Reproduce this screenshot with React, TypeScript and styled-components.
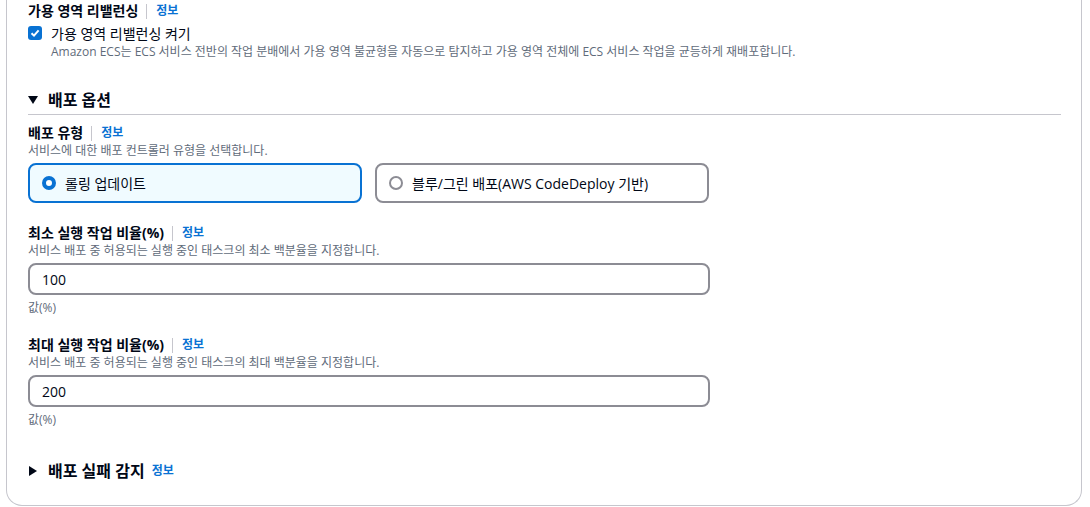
import React from "react";
import styled, { createGlobalStyle } from "styled-components";

const Global = createGlobalStyle`
  html, body { margin: 0; padding: 0; background: #ffffff; }
  body {
    font-family: "Open Sans", "Noto Sans CJK KR", "Noto Sans", sans-serif;
    color: #000716;
    -webkit-font-smoothing: antialiased;
  }
`;

const Page = styled.div`
  padding: 0 8px 1px 6px;
  height: 507px;
  box-sizing: border-box;
  display: flex;
  flex-direction: column;
`;

const Card = styled.section`
  flex: 1;
  border: 1px solid #c6c6cd;
  border-top: none;
  border-radius: 0 0 16px 16px;
  padding: 0 20px 22px 21px;
  display: flex;
  flex-direction: column;
`;

const Field = styled.div<{ $mt?: number }>`
  display: flex;
  flex-direction: column;
  margin-top: ${(p) => p.$mt ?? 0}px;
`;

const LabelRow = styled.div<{ $h?: number }>`
  display: flex;
  align-items: center;
  height: ${(p) => p.$h ?? 20}px;
`;

const Label = styled.span`
  font-size: 14px;
  font-weight: 700;
  line-height: 20px;
`;

const Sep = styled.span`
  width: 1px;
  height: 15px;
  background: #c6c6cd;
  margin: 0 9px 0 8px;
`;

const InfoLink = styled.a<{ $ml?: number }>`
  font-size: 12px;
  font-weight: 700;
  color: #0972d3;
  text-decoration: none;
  line-height: 16px;
  margin-left: ${(p) => p.$ml ?? 0}px;
`;

const Desc = styled.div<{ $indent?: number }>`
  font-size: 12px;
  line-height: 16px;
  color: #5f6b7a;
  padding-left: ${(p) => p.$indent ?? 0}px;
`;

const CheckRow = styled.label`
  display: flex;
  align-items: center;
  gap: 9px;
  height: 22px;
  font-size: 14px;
`;

const CheckBox = styled.span`
  width: 14px;
  height: 14px;
  border-radius: 3px;
  background: #0972d3;
  display: flex;
  align-items: center;
  justify-content: center;
`;

const SectionHeader = styled.div<{ $divider?: boolean; $mt?: number }>`
  display: flex;
  align-items: center;
  gap: 10px;
  height: 24px;
  margin-top: ${(p) => p.$mt ?? 0}px;
  padding-bottom: ${(p) => (p.$divider ? 2 : 0)}px;
  border-bottom: ${(p) => (p.$divider ? "1px solid #c6c6cd" : "none")};
`;

const SectionTitle = styled.h2`
  margin: 0;
  font-size: 16px;
  font-weight: 700;
  line-height: 24px;
`;

const Tiles = styled.div`
  display: flex;
  gap: 13px;
  margin-top: 4px;
`;

const Tile = styled.div<{ $selected?: boolean }>`
  width: 334px;
  height: 40px;
  box-sizing: border-box;
  border: 2px solid ${(p) => (p.$selected ? "#0972d3" : "#8c8c94")};
  background: ${(p) => (p.$selected ? "#f0fbff" : "#ffffff")};
  border-radius: 8px;
  display: flex;
  align-items: center;
  gap: 9px;
  padding: 0 12px;
  font-size: 14px;
`;

const Radio = styled.span<{ $on?: boolean }>`
  width: 14px;
  height: 14px;
  box-sizing: border-box;
  border-radius: 50%;
  border: ${(p) => (p.$on ? "4px solid #0972d3" : "2px solid #8c8c94")};
  background: #fff;
  flex: none;
`;

const Input = styled.div`
  width: 682px;
  height: 32px;
  box-sizing: border-box;
  border: 2px solid #8c8c94;
  border-radius: 8px;
  padding: 0 12px;
  display: flex;
  align-items: center;
  font-size: 14px;
  margin-top: 4px;
`;

const Hint = styled.div`
  font-size: 12px;
  line-height: 16px;
  color: #5f6b7a;
  margin-top: 5px;
`;

const Caret = ({ down }: { down?: boolean }) =>
  down ? (
    <svg width="10" height="8" viewBox="0 0 10 8">
      <path d="M0 0 H10 L5 8 Z" fill="#000716" />
    </svg>
  ) : (
    <svg width="8" height="10" viewBox="0 0 8 10">
      <path d="M0 0 L8 5 L0 10 Z" fill="#000716" />
    </svg>
  );

const CaretBox = styled.span<{ $w: number }>`
  width: ${(p) => p.$w}px;
  display: flex;
  justify-content: center;
`;

export default function App() {
  return (
    <>
      <Global />
      <Page>
        <Card>
          <Field>
            <LabelRow $h={22}>
              <Label>가용 영역 리밸런싱</Label>
              <Sep />
              <InfoLink href="#">정보</InfoLink>
            </LabelRow>
            <CheckRow>
              <CheckBox>
                <svg width="10" height="10" viewBox="0 0 10 10">
                  <path d="M1.5 5.2 L4 7.6 L8.6 2.4" stroke="#fff" strokeWidth="2" fill="none" />
                </svg>
              </CheckBox>
              가용 영역 리밸런싱 켜기
            </CheckRow>
            <Desc $indent={23}>
              Amazon ECS는 ECS 서비스 전반의 작업 분배에서 가용 영역 불균형을 자동으로 탐지하고 가용 영역 전체에 ECS 서비스 작업을 균등하게 재배포합니다.
            </Desc>
          </Field>

          <SectionHeader $divider $mt={28}>
            <CaretBox $w={10}><Caret down /></CaretBox>
            <SectionTitle>배포 옵션</SectionTitle>
          </SectionHeader>

          <Field $mt={8}>
            <LabelRow>
              <Label>배포 유형</Label>
              <Sep />
              <InfoLink href="#">정보</InfoLink>
            </LabelRow>
            <Desc>서비스에 대한 배포 컨트롤러 유형을 선택합니다.</Desc>
            <Tiles>
              <Tile $selected>
                <Radio $on />
                롤링 업데이트
              </Tile>
              <Tile>
                <Radio />
                블루/그린 배포(AWS CodeDeploy 기반)
              </Tile>
            </Tiles>
          </Field>

          <Field $mt={20}>
            <LabelRow>
              <Label>최소 실행 작업 비율(%)</Label>
              <Sep />
              <InfoLink href="#">정보</InfoLink>
            </LabelRow>
            <Desc>서비스 배포 중 허용되는 실행 중인 태스크의 최소 백분율을 지정합니다.</Desc>
            <Input>100</Input>
            <Hint>값(%)</Hint>
          </Field>

          <Field $mt={19}>
            <LabelRow>
              <Label>최대 실행 작업 비율(%)</Label>
              <Sep />
              <InfoLink href="#">정보</InfoLink>
            </LabelRow>
            <Desc>서비스 배포 중 허용되는 실행 중인 태스크의 최대 백분율을 지정합니다.</Desc>
            <Input>200</Input>
            <Hint>값(%)</Hint>
          </Field>

          <SectionHeader $mt={31}>
            <CaretBox $w={10}><Caret /></CaretBox>
            <SectionTitle>배포 실패 감지</SectionTitle>
            <InfoLink href="#" $ml={-3}>정보</InfoLink>
          </SectionHeader>
        </Card>
      </Page>
    </>
  );
}
